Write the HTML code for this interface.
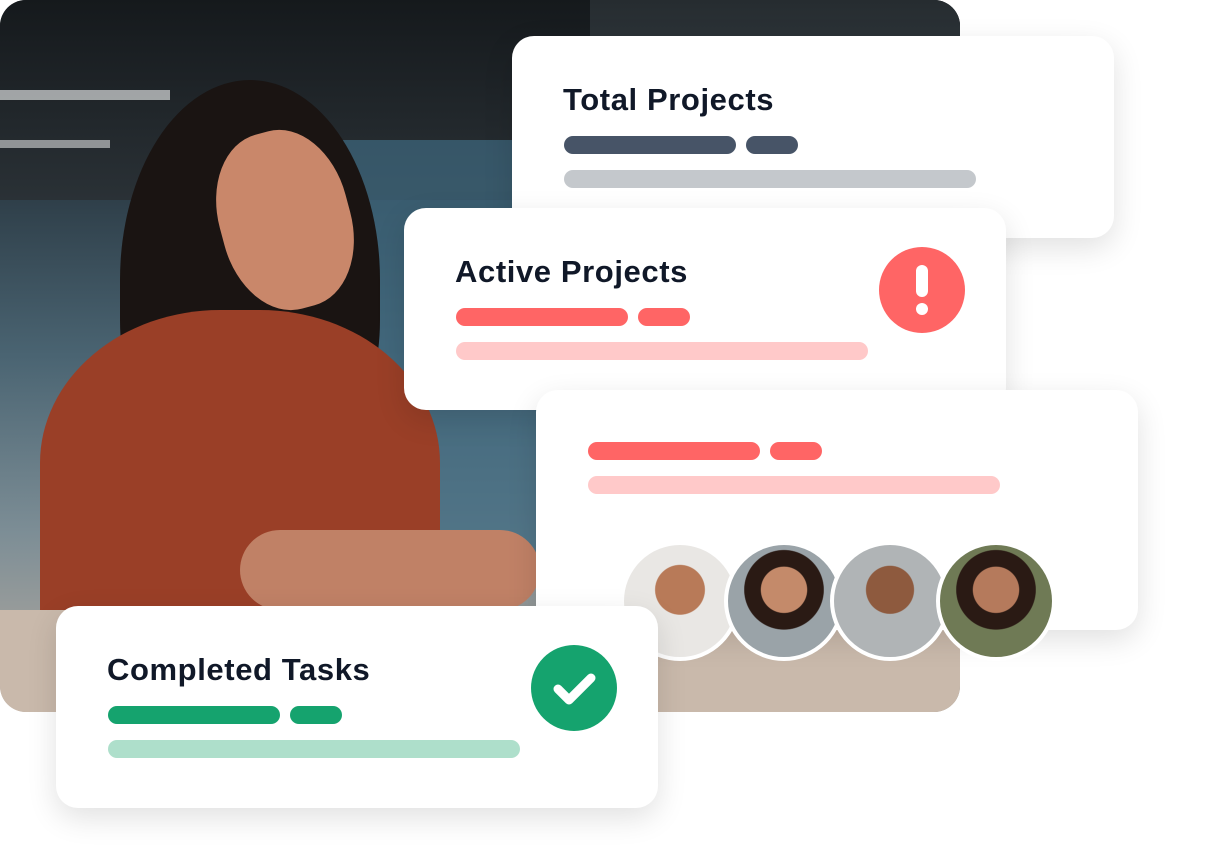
<!DOCTYPE html>
<html><head><meta charset="utf-8"><style>
*{margin:0;padding:0;box-sizing:border-box}
body{width:1232px;height:856px;background:#fff;position:relative;overflow:hidden;font-family:"Liberation Sans",sans-serif}
.photo{position:absolute;left:0;top:0;width:960px;height:712px;border-radius:26px;overflow:hidden;
background:linear-gradient(180deg,#1f2428 0%,#2b3a44 25%,#4a6472 50%,#7d8e96 75%,#b8aca0 100%)}
.card{position:absolute;background:#fff;border-radius:22px;box-shadow:0 10px 30px rgba(0,0,0,.12)}
.card h2{position:absolute;font-size:31px;font-weight:700;color:#101828;letter-spacing:0.6px}
.bar{position:absolute;height:18px;border-radius:9px}
.av{position:absolute;width:120px;height:120px;border-radius:50%;border:4px solid #fff;overflow:hidden}
</style></head><body>
<div class="photo">
 <div style="position:absolute;left:0;top:0;width:960px;height:200px;background:linear-gradient(180deg,#15191c,#2a3136)"></div>
 <div style="position:absolute;left:0;top:90px;width:170px;height:10px;background:#d8dcdc;opacity:.7"></div>
 <div style="position:absolute;left:0;top:140px;width:110px;height:8px;background:#d8dcdc;opacity:.6"></div>
 <div style="position:absolute;left:330px;top:140px;width:260px;height:420px;background:#3f6a80;opacity:.7"></div>
 <div style="position:absolute;left:590px;top:0;width:370px;height:712px;background:linear-gradient(180deg,#262c30,#55656d 50%,#a8a39c)"></div>
 <div style="position:absolute;left:120px;top:80px;width:260px;height:400px;border-radius:50% 50% 40% 40%;background:#1a1412"></div>
 <div style="position:absolute;left:220px;top:130px;width:130px;height:180px;border-radius:45%;background:#c9876a;transform:rotate(-15deg)"></div>
 <div style="position:absolute;left:40px;top:310px;width:400px;height:340px;border-radius:45% 45% 10% 10%;background:#9a3f27"></div>
 <div style="position:absolute;left:240px;top:530px;width:300px;height:80px;border-radius:40px;background:#c08166"></div>
 <div style="position:absolute;left:0;top:610px;width:960px;height:102px;background:#c9b9ab"></div>
</div>
<div class="card" style="left:512px;top:36px;width:602px;height:202px">
 <h2 style="left:51px;top:46px">Total Projects</h2>
 <div class="bar" style="left:52px;top:100px;width:172px;background:#475467"></div>
 <div class="bar" style="left:234px;top:100px;width:52px;background:#475467"></div>
 <div class="bar" style="left:52px;top:134px;width:412px;background:#c4c8cc"></div>
</div>
<div class="card" style="left:404px;top:208px;width:602px;height:202px">
 <h2 style="left:51px;top:46px">Active Projects</h2>
 <div class="bar" style="left:52px;top:100px;width:172px;background:#ff6565"></div>
 <div class="bar" style="left:234px;top:100px;width:52px;background:#ff6565"></div>
 <div class="bar" style="left:52px;top:134px;width:412px;background:#ffc9c9"></div>
 <div style="position:absolute;left:475px;top:39px;width:86px;height:86px;border-radius:50%;background:#ff6565">
  <div style="position:absolute;left:37px;top:18px;width:12px;height:32px;border-radius:6px;background:#fff"></div>
  <div style="position:absolute;left:37px;top:56px;width:12px;height:12px;border-radius:6px;background:#fff"></div>
 </div>
</div>
<div class="card" style="left:536px;top:390px;width:602px;height:240px">
 <div class="bar" style="left:52px;top:52px;width:172px;background:#ff6565"></div>
 <div class="bar" style="left:234px;top:52px;width:52px;background:#ff6565"></div>
 <div class="bar" style="left:52px;top:86px;width:412px;background:#ffc9c9"></div>
</div>
<div class="av" style="left:620px;top:541px;background:radial-gradient(circle at 50% 40%,#b87a58 0 28%,#e9e7e4 29%)"></div>
<div class="av" style="left:724px;top:541px;background:radial-gradient(circle at 50% 40%,#c48a6a 0 26%,#2a1a14 27% 45%,#9aa3a8 46%)"></div>
<div class="av" style="left:830px;top:541px;background:radial-gradient(circle at 50% 40%,#8e5a3e 0 27%,#b0b4b6 28%)"></div>
<div class="av" style="left:936px;top:541px;background:radial-gradient(circle at 50% 40%,#b57a5c 0 26%,#2a1a14 27% 45%,#6f7a55 46%)"></div>
<div class="card" style="left:56px;top:606px;width:602px;height:202px">
 <h2 style="left:51px;top:46px">Completed Tasks</h2>
 <div class="bar" style="left:52px;top:100px;width:172px;background:#15a36e"></div>
 <div class="bar" style="left:234px;top:100px;width:52px;background:#15a36e"></div>
 <div class="bar" style="left:52px;top:134px;width:412px;background:#aedfcb"></div>
 <svg style="position:absolute;left:475px;top:39px" width="86" height="86" viewBox="0 0 86 86"><circle cx="43" cy="43" r="43" fill="#15a36e"/><path d="M27 44 L38 55 L60 33" stroke="#fff" stroke-width="9" fill="none" stroke-linecap="round" stroke-linejoin="round"/></svg>
</div>
</body></html>
